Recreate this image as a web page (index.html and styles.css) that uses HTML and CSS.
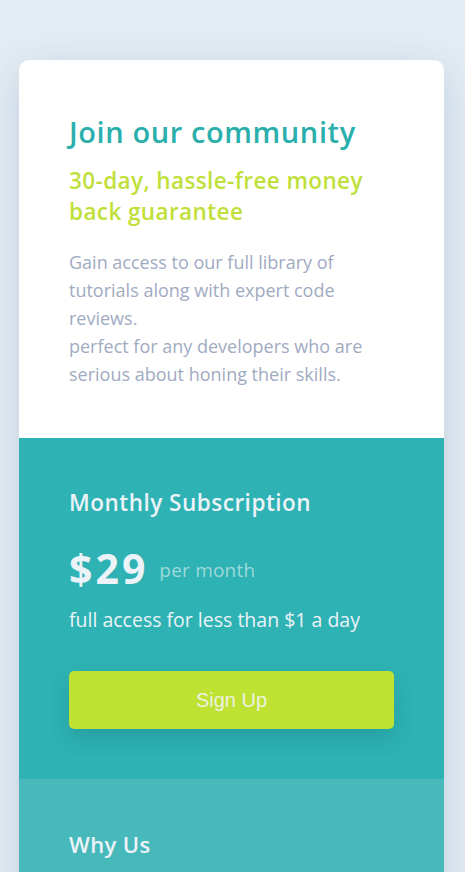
FILE: index.html
```html
<!DOCTYPE html>
<html lang="en">
<head>
<meta charset="utf-8">
<title>Single price grid</title>
<link rel="stylesheet" href="styles.css">
</head>
<body>
<main class="card">
  <section class="intro">
    <h1 class="title">Join our community</h1>
    <h2 class="guarantee">30-day, hassle-free money back guarantee</h2>
    <p class="desc">Gain access to our full library of tutorials along with expert code reviews.<br>perfect for any developers who are serious about honing their skills.</p>
  </section>
  <section class="subscription">
    <h3 class="sub-title">Monthly Subscription</h3>
    <div class="price-row"><span class="price">$29</span><span class="per">per month</span></div>
    <p class="access">full access for less than $1 a day</p>
    <button class="signup">Sign Up</button>
  </section>
  <section class="why">
    <h3 class="why-title">Why Us</h3>
  </section>
</main>
</body>
</html>
```
FILE: styles.css
```css
* { box-sizing: border-box; }
html, body { margin: 0; padding: 0; }
body {
  background: #e4edf4;
  font-family: "Open Sans", "Noto Sans", sans-serif;
  padding: 60px 21px 0 19px;
  height: 872px;
  overflow: hidden;
}
.card {
  width: 425px;
  border-radius: 10px;
  overflow: hidden;
  background: #fff;
  box-shadow: 0 10px 40px rgba(120, 150, 180, 0.35);
}
.intro {
  padding: 52px 50px 50px 50px;
}
.title {
  margin: 0;
  color: #2aafac;
  font-size: 29px;
  font-weight: 600;
  line-height: 40px;
  letter-spacing: 0.6px;
}
.guarantee {
  margin: 13px 0 0;
  color: #bfdf3a;
  font-size: 22.5px;
  font-weight: 600;
  line-height: 31px;
  letter-spacing: 0.4px;
}
.desc {
  margin: 21px 0 0;
  color: #9fabc1;
  font-size: 18px;
  line-height: 28px;
}
.subscription {
  background: #2eb2b3;
  padding: 50px 50px 50px 50px;
  color: #ecf3f8;
}
.sub-title {
  margin: 0;
  font-size: 22.5px;
  font-weight: 600;
  line-height: 30px;
  letter-spacing: 0.5px;
}
.price-row {
  display: flex;
  align-items: center;
  margin-top: 26px;
}
.price {
  font-size: 41px;
  font-weight: 700;
  line-height: 48px;
  letter-spacing: 3px;
}
.per {
  margin-left: 11px;
  padding-top: 4px;
  font-size: 19px;
  color: #9dd9d9;
  letter-spacing: 0.2px;
}
.access {
  margin: 15px 0 0;
  font-size: 19.5px;
  line-height: 26px;
}
.signup {
  display: block;
  width: 100%;
  margin-top: 38px;
  height: 58px;
  border: 0;
  border-radius: 5px;
  background: #bfe132;
  color: #ecf3e0;
  font-family: "Liberation Sans", Arial, sans-serif;
  font-size: 20px;
  box-shadow: 0 10px 20px rgba(0, 80, 80, 0.18);
}
.why {
  background: #48b9ba;
  padding: 50px 50px 60px;
  color: #ecf3f8;
}
.why-title {
  margin: 0;
  font-size: 22px;
  font-weight: 600;
  line-height: 30px;
  letter-spacing: 0.4px;
}
```
